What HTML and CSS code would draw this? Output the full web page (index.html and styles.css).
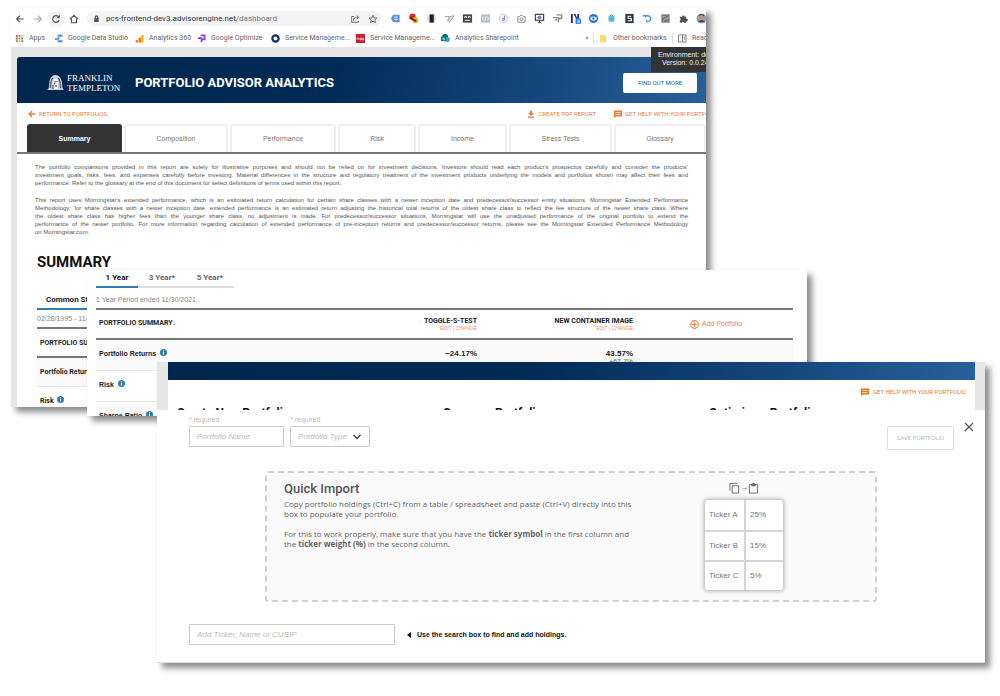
FILE: index.html
```html
<!DOCTYPE html>
<html lang="en">
<head>
<meta charset="utf-8">
<title>Portfolio Advisor Analytics</title>
<link rel="stylesheet" href="styles.css">
</head>
<body>
<main class="stage">

<section class="window window-report">
  <div class="toolbar">
    <div class="nav">
      <button aria-label="Back"><svg viewBox="0 0 12 12"><path d="M10.500 6H2M6 2 2 6l4 4" class="ln"/></svg></button>
      <button aria-label="Forward" class="dim"><svg viewBox="0 0 12 12"><path d="M1.500 6H10M6 2l4 4-4 4" class="ln"/></svg></button>
      <button aria-label="Reload" class="halo"><svg viewBox="0 0 12 12"><path d="M9.700 7.500A4 4 0 1 1 9 3.300" class="ln"/><path d="M10.500 1v4h-4z"/></svg></button>
      <button aria-label="Home"><svg viewBox="0 0 12 12"><path d="M1 6.500 6 1.500l5 5M3 5.500V10.500h6v-5" class="ln"/></svg></button>
    </div>
    <div class="address">
      <svg viewBox="0 0 8 8" class="lock"><path d="M1.500 3.500h5V8h-5z"/><path d="M2.700 4V2.200a1.300 1.300 0 0 1 2.600 0V4" class="ln"/></svg>
      <span class="url">pcs-frontend-dev3.advisorengine.net<span class="path">/dashboard</span></span>
      <button aria-label="Share"><svg viewBox="0 0 12 12"><path d="M5 3H2v7h8V8M4 8c0-3 2-4 4-4h2M8 2l2.500 2L8 6" class="ln thin"/></svg></button>
      <button aria-label="Bookmark"><svg viewBox="0 0 12 12"><path d="M6 1.500 7.300 4.700l3.400.2-2.600 2.200.8 3.400L6 8.600l-2.900 1.900.8-3.400L1.300 4.900l3.400-.2z" class="ln thin"/></svg></button>
    </div>
    <div class="extensions">
      <svg viewBox="0 0 12 12"><path d="M3.500 2h7v8h-7L1 6z" fill="#5b8ff0"/><path d="M4.500 4.500h4M4.500 7h4" stroke="#fff"/></svg>
      <svg viewBox="0 0 12 12"><circle cx="5" cy="4" r="3.500" fill="#d93025"/><circle cx="8" cy="8" r="3.300" fill="#edb52a"/><path d="M2 5 9 9" stroke="#702018" stroke-width="2"/></svg>
      <svg viewBox="0 0 12 12"><circle cx="6" cy="6" r="5" fill="#ddd"/><rect x="4" y="1.500" width="4.500" height="9" fill="#222"/></svg>
      <svg viewBox="0 0 12 12"><path d="M1 4h5L4 8M6 4l5-1-5 7-2-2 4-3" fill="none" stroke="#999"/></svg>
      <svg viewBox="0 0 12 12"><rect x="1" y="1.500" width="10" height="9" fill="#444"/><path d="M3 5.500V4h2v1.500M7 5.500V4h2v1.500M3 8h6" fill="none" stroke="#fff"/></svg>
      <svg viewBox="0 0 12 12"><rect x="1" y="1.500" width="10" height="9" fill="#b9bfc6"/><path d="M4 4 2.500 6 4 8M8 4l1.500 2L8 8M6.500 4l-1 4" fill="none" stroke="#fff"/></svg>
      <svg viewBox="0 0 12 12"><circle cx="6" cy="6" r="4.500" fill="#f8f8fc" stroke="#c4c4d6"/><path d="M7 3v5H5V6h2" fill="none" stroke="#7a7ac0"/></svg>
      <svg viewBox="0 0 12 12"><path d="M2 4h2l1-1.500h2L8 4h2v6H2z" fill="none" stroke="#888"/><circle cx="6" cy="6.800" r="1.600" fill="none" stroke="#888"/></svg>
      <svg viewBox="0 0 12 12"><rect x="1.500" y="1.500" width="9" height="6.500" fill="none" stroke="#444" stroke-width="1.300"/><path d="M4 10.500h4M6 8v2" stroke="#444"/><circle cx="6" cy="4.700" r="2" fill="#8573d8"/></svg>
      <svg viewBox="0 0 12 12"><path d="M5 2h5.500v4H7M1 5h6v5M3 7.500h3" fill="none" stroke="#888" stroke-width="1.400"/></svg>
      <svg viewBox="0 0 12 12"><path d="M1 1h2v10H1zM4 1h2l2 5V1h2v6H7z" fill="#1b2a5c"/><rect x="6" y="6" width="6" height="6" rx="1" fill="#2f7df6"/><path d="M8 7.500h2v3H8M8 9h2" fill="none" stroke="#fff" stroke-width=".7"/></svg>
      <svg viewBox="0 0 12 12"><circle cx="6" cy="6" r="5" fill="#1a73e8"/><ellipse cx="6" cy="6" rx="3.500" ry="2.300" fill="#fff"/><circle cx="6" cy="6" r="1.300" fill="#1a73e8"/></svg>
      <svg viewBox="0 0 12 12"><circle cx="6" cy="6.500" r="3.500" fill="#62c5dc"/><path d="M3 4 6 2l3 2M4 6.500h4" fill="none" stroke="#2e93b0"/></svg>
      <svg viewBox="0 0 12 12"><rect x="1.500" y="1" width="9" height="10" fill="#2c3440"/><path d="M8 3.500H4.500V6H8v2.500H4" fill="none" stroke="#fff" stroke-width="1.200"/></svg>
      <svg viewBox="0 0 12 12"><path d="M1 3h5a3 3 0 0 1 0 6.500H5V7M4 3v2" fill="none" stroke="#4b93ef" stroke-width="1.400"/></svg>
      <svg viewBox="0 0 12 12"><rect x="1.500" y="1.500" width="9" height="9" fill="#777"/><path d="M3 9 6 6l2 1 2-3M2 4h4" fill="none" stroke="#ccc" stroke-width=".8"/></svg>
      <svg viewBox="0 0 12 12"><path d="M2 4h2.500a1.400 1.400 0 1 1 2.800 0H9v2.300a1.400 1.400 0 1 1 0 2.700v1.500H6.500a1.300 1.300 0 0 0-2.500 0H2V8a1.300 1.300 0 0 0 0-2.500z" fill="#4d5156"/></svg>
      <svg viewBox="0 0 12 12"><circle cx="6" cy="6" r="5.500" fill="#9aa4b5"/><circle cx="6" cy="4.500" r="2.300" fill="#c98f75"/><path d="M2 10c1-3 7-3 8 0z" fill="#3b4a66"/><path d="M3.500 3.500C4 1 8 1 8.500 3.500" fill="none" stroke="#444" stroke-width="1.300"/></svg>
    </div>
  </div>

  <nav class="bookmarks" aria-label="Bookmarks">
    <a href="#"><svg viewBox="0 0 10 10"><path d="M1 1h2v2H1zM1 4h2v2H1z" fill="#ea4335"/><path d="M4 1h2v2H4zM7 7h2v2H7z" fill="#ea6035"/><path d="M7 1h2v2H7zM4 7h2v2H4z" fill="#fbbc05"/><path d="M4 4h2v2H4z" fill="#4285f4"/><path d="M7 4h2v2H7zM1 7h2v2H1z" fill="#34a853"/></svg>Apps</a>
    <a href="#"><svg viewBox="0 0 10 10"><path d="M2 5.500h3M5 2h3.500M5 8h3.500" stroke="#4285f4" stroke-width="2.200" stroke-linecap="round"/><path d="M3 5.500 5.500 2.500M3 5.500l3 2.500" stroke="#7fb0fb" stroke-width="1.500"/></svg>Google Data Studio</a>
    <a href="#"><svg viewBox="0 0 10 10"><circle cx="2" cy="8" r="1.400" fill="#e37400"/><rect x="4" y="4" width="2.500" height="5.500" rx="1" fill="#e37400"/><rect x="7" y="1" width="2.500" height="8.500" rx="1" fill="#f9ab00"/></svg>Analytics 360</a>
    <a href="#"><svg viewBox="0 0 10 10"><path d="M1 4.500h4V9M4 1.500h4.500V6H6" fill="none" stroke="#8a3ff0" stroke-width="2"/></svg>Google Optimize</a>
    <a href="#"><svg viewBox="0 0 10 10"><circle cx="5" cy="5" r="3.500" fill="none" stroke="#0b2a7a" stroke-width="2.400"/></svg>Service Manageme...</a>
    <a href="#"><svg viewBox="0 0 10 10"><path d="M0 0h10v10H0z" fill="#c8202c"/><path d="M1.500 6.500V4.500h1.500v2M4.500 4.500H6v2H4.500zM7 4.500v2h1.500v-2" fill="none" stroke="#fff" stroke-width=".7"/></svg>Service Manageme...</a>
    <a href="#"><svg viewBox="0 0 10 10"><circle cx="4.500" cy="3.500" r="3.400" fill="#036c70"/><circle cx="7" cy="6" r="2.800" fill="#37a6a8"/><rect x="0" y="3" width="5.500" height="5" fill="#03787c"/><path d="M4 4.500H2v1h2v1H1.800" fill="none" stroke="#fff" stroke-width=".6"/></svg>Analytics Sharepoint</a>
    <button aria-label="More bookmarks">»</button>
    <a href="#" class="ruled"><svg viewBox="0 0 10 10"><path d="M1 1h5l2 1.500V9.500H1z" fill="#fbdc74"/></svg>Other bookmarks</a>
    <a href="#" class="ruled"><svg viewBox="0 0 10 10"><path d="M.5 1h8.500v8H.5zM5 1v8M6 3.500h2M6 5.500h2" fill="none" stroke="#777"/></svg>Read</a>
  </nav>

  <div class="viewport">
    <div class="env"><p>Environment: dev<br>Version: 0.0.24</p></div>
    <div class="site">
      <header class="banner">
        <div class="logo">
          <svg viewBox="0 0 17 16"><path d="M0 15C2 14 2 12 2.300 8 2.700 3 5 0 8.500 0S14.500 3 15 8c.3 4 .3 6 2 7z" fill="#cfd3d8"/><path d="M3.500 13C4 10 3 5 6 3M13.500 13c-.5-3 .3-8-2.500-10" fill="none" stroke="#4a5560" stroke-width="1.200"/><path d="M6.500 14V5.500C7 3.500 10 3.500 10.500 5.500V14z" fill="#fff"/><path d="M8 6v2l-1 1.500M9.500 6.500h1M8 11h2M6 14v-4" fill="none" stroke="#3a4550"/></svg>
          <span>FRANKLIN<br>TEMPLETON</span>
        </div>
        <h1>PORTFOLIO ADVISOR ANALYTICS</h1>
        <a href="#" class="more">FIND OUT MORE</a>
      </header>
      <div class="actions">
        <a href="#" class="back"><svg viewBox="0 0 8 8"><path d="M7 4H1.500M4 1 1.200 4 4 7" fill="none" stroke="currentColor" stroke-width="1.300"/></svg>RETURN TO PORTFOLIOS</a>
        <a href="#"><svg viewBox="0 0 8 8"><path d="M3 .5h2v2.500h2L4 6 1 3h2zM1 6.500h6v1.300H1z" fill="currentColor"/></svg>CREATE PDF REPORT</a>
        <a href="#"><svg viewBox="0 0 8 8"><path d="M0 .5h8v6H2L0 8z" fill="currentColor"/><path d="M1.500 2.500h5M1.500 4.500h5" stroke="#fff" stroke-width=".8"/></svg>GET HELP WITH YOUR PORTFOLIO</a>
      </div>
      <nav class="tabs" aria-label="Report">
        <a href="#" class="on">Summary</a><a href="#">Composition</a><a href="#">Performance</a><a href="#">Risk</a><a href="#">Income</a><a href="#">Stress Tests</a><a href="#">Glossary</a>
      </nav>
      <div class="notes">
        <p>The portfolio comparisons provided in this report are solely for illustrative purposes and should not be relied on for investment decisions. Investors should read each product's prospectus carefully and consider the products'<br>investment goals, risks, fees, and expenses carefully before investing. Material differences in the structure and regulatory treatment of the investment products underlying the models and portfolios shown may affect their fees and<br><span class="end">performance. Refer to the glossary at the end of this document for select definitions of terms used within this report.</span></p>
        <p>This report uses Morningstar's extended performance, which is an estimated return calculation for certain share classes with a newer inception date and predecessor/successor entity situations. Morningstar Extended Performance<br>Methodology: for share classes with a newer inception date, extended performance is an estimated return adjusting the historical total returns of the oldest share class to reflect the fee structure of the newer share class. Where<br>the oldest share class has higher fees than the younger share class, no adjustment is made. For predecessor/successor situations, Morningstar will use the unadjusted performance of the original portfolio to extend the<br>performance of the newer portfolio. For more information regarding calculation of extended performance of pre-inception returns and predecessor/successor returns, please see the Morningstar Extended Performance Methodology<br><span class="end">on Morningstar.com.</span></p>
      </div>
      <div class="summary">
        <h2>SUMMARY</h2>
        <a href="#" class="period">Common Start</a>
        <p class="range">02/28/1995 - 11/30/2021</p>
        <table>
          <thead><tr><th>PORTFOLIO SUMMARY</th></tr></thead>
          <tbody>
            <tr><th>Portfolio Returns</th></tr>
            <tr><th>Risk <svg class="info" viewBox="0 0 8 8"><circle cx="4" cy="4" r="4" fill="#2f7db5"/><path d="M4 1.500v1M4 3.300v3" stroke="#fff" stroke-width="1.200"/></svg></th></tr>
          </tbody>
        </table>
      </div>
    </div>
  </div>
</section>

<section class="window window-returns">
  <nav class="years" aria-label="Period">
    <a href="#" class="on">1 Year</a><a href="#">3 Year*</a><a href="#">5 Year*</a>
  </nav>
  <p class="range">1 Year Period ended 11/30/2021</p>
  <table>
    <colgroup><col class="c-name"><col class="c-fund"><col class="c-fund"><col></colgroup>
    <thead>
      <tr>
        <th class="name">PORTFOLIO SUMMARY↓</th>
        <th>TOGGLE-S-TEST<small><a href="#">EDIT</a> | <a href="#">CHANGE</a></small></th>
        <th>NEW CONTAINER IMAGE<small><a href="#">EDIT</a> | <a href="#">CHANGE</a></small></th>
        <th class="add"><a href="#"><svg viewBox="0 0 8 8"><circle cx="4" cy="4" r="3.400" fill="none" stroke="currentColor"/><path d="M4 2v4M2 4h4" stroke="currentColor"/></svg>Add Portfolio</a></th>
      </tr>
    </thead>
    <tbody>
      <tr><th class="name">Portfolio Returns <svg class="info" viewBox="0 0 8 8"><circle cx="4" cy="4" r="4" fill="#2f7db5"/><path d="M4 1.500v1M4 3.300v3" stroke="#fff" stroke-width="1.200"/></svg></th><td>−24.17%</td><td>43.57%<span class="gain">+67.7%</span></td><td></td></tr>
      <tr><th class="name">Risk <svg class="info" viewBox="0 0 8 8"><circle cx="4" cy="4" r="4" fill="#2f7db5"/><path d="M4 1.500v1M4 3.300v3" stroke="#fff" stroke-width="1.200"/></svg></th><td></td><td></td><td></td></tr>
      <tr><th class="name">Sharpe Ratio <svg class="info" viewBox="0 0 8 8"><circle cx="4" cy="4" r="4" fill="#2f7db5"/><path d="M4 1.500v1M4 3.300v3" stroke="#fff" stroke-width="1.200"/></svg></th><td></td><td></td><td></td></tr>
    </tbody>
  </table>
</section>

<section class="window window-import">
  <div class="behind">
    <div class="bar"></div>
    <div class="sheet">
      <a href="#" class="help"><svg viewBox="0 0 8 8"><path d="M0 .5h8v6H2L0 8z" fill="currentColor"/><path d="M1.500 2.500h5M1.500 4.500h5" stroke="#fff" stroke-width=".8"/></svg>GET HELP WITH YOUR PORTFOLIO</a>
      <div class="heads"><h2>Create New Portfolio</h2><h2>Compare Portfolio</h2><h2>Optimize a Portfolio</h2></div>
    </div>
  </div>
  <form class="panel">
    <div class="fields">
      <div class="field name-field"><label for="pname">* required</label><input id="pname" type="text" placeholder="Portfolio Name"></div>
      <div class="field type-field"><label for="ptype">* required</label>
        <div class="pick"><select id="ptype"><option>Portfolio Type</option></select><svg viewBox="0 0 10 10"><path d="M1.500 3 5 6.500 8.500 3" fill="none" stroke="#444" stroke-width="1.500"/></svg></div>
      </div>
      <button type="button" class="save">SAVE PORTFOLIO</button>
      <button type="button" class="close" aria-label="Close"><svg viewBox="0 0 10 10"><path d="M1 1l8 8M9 1 1 9" stroke="#555" stroke-width="1.200"/></svg></button>
    </div>
    <div class="drop">
      <div class="copy">
        <h3>Quick Import</h3>
        <p>Copy portfolio holdings (Ctrl+C) from a table / spreadsheet and paste (Ctrl+V) directly into this<br>box to populate your portfolio.</p>
        <p>For this to work properly, make sure that you have the <b>ticker symbol</b> in the first column and<br>the <b>ticker weight (%)</b> in the second column.</p>
      </div>
      <div class="sample">
        <div class="hint-icons">
          <svg viewBox="0 0 12 12"><path d="M1 9V1h8M3.500 3.500h7v8h-7z" fill="none" stroke="#666"/></svg><span>→</span><svg viewBox="0 0 12 12"><path d="M1.500 2h9v9.500h-9z" fill="none" stroke="#666"/><path d="M3.500 1.500h1.300a1.200 1.200 0 0 1 2.400 0h1.300V4h-5z" fill="#666"/></svg>
        </div>
        <table>
          <tr><td>Ticker A</td><td>25%</td></tr>
          <tr><td>Ticker B</td><td>15%</td></tr>
          <tr><td>Ticker C</td><td>5%</td></tr>
        </table>
      </div>
    </div>
    <div class="search">
      <input id="find" type="text" placeholder="Add Ticker, Name or CUSIP">
      <label for="find"><svg viewBox="0 0 4 6"><path d="M4 0v6L0 3z"/></svg>Use the search box to find and add holdings.</label>
    </div>
  </form>
</section>

</main>
</body>
</html>
```
FILE: styles.css
```css
* { box-sizing: border-box; }
:root { --narrow: Roboto, "Liberation Sans", Arial, sans-serif; }
body { margin: 0; background: #fff; color: #555; font: 8px/10px "Liberation Sans", Arial, sans-serif; }
h1, h2, h3, p { margin: 0; }
a { color: inherit; text-decoration: none; }
button { padding: 0; border: 0; background: none; font: inherit; color: inherit; }
svg { display: block; flex: none; }
table { border-collapse: collapse; }
th, td { padding: 0; text-align: left; }

.stage { position: relative; min-height: 696px; overflow: hidden; }
.window { position: absolute; overflow: hidden; background: #fff; box-shadow: 5px 5px 6px rgba(0, 0, 0, .45); }
.window-report { left: 1.1%; top: 8px; width: 69.5%; height: 399px; }
.window-returns { left: 8.7%; top: 270px; width: 72%; height: 146px; padding: 0 14px 0 9px; }
.window-import { left: 15.7%; top: 362px; width: 82.8%; }

/* Browser chrome */
.toolbar { display: flex; align-items: center; height: 21px; overflow: hidden; }
.toolbar button { display: grid; place-items: center; width: 18px; height: 16px; flex: none; }
.toolbar svg { width: 10px; height: 10px; fill: #555; }
.ln { fill: none; stroke: #555; stroke-width: 1.400; }
.thin { stroke-width: 1; }
.nav { display: flex; width: 76px; flex: none; }
.dim { opacity: .5; }
.toolbar .halo { border-radius: 8px; background: #f1f3f4; }
.address { display: flex; align-items: center; flex: 1; height: 15px; padding-left: 6px; border-radius: 8px; background: #f1f3f4; }
.toolbar .lock { width: 7px; height: 7px; margin-right: 6px; }
.url { flex: 1; color: #333; font: 8px/12px Roboto, sans-serif; white-space: nowrap; }
.path { color: #777; }
.extensions { display: grid; grid-template-columns: repeat(18, 18px); place-items: center; width: 320px; margin-left: 4px; }
.toolbar .extensions svg { width: 11px; height: 11px; }

.bookmarks { display: grid; grid-template-columns: 39px 81px 62px 74px 85px 85px 1fr 12px 79px 34px; align-items: center; height: 18px; padding-left: 4px; font: 7px/10px Roboto, sans-serif; color: #666; white-space: nowrap; }
.bookmarks a { display: flex; align-items: center; gap: 5px; }
.bookmarks svg { width: 9px; height: 9px; }
.bookmarks .ruled { border-left: 1px solid #ddd; padding-left: 5px; }

.viewport { position: relative; height: 360px; padding: 10px 0 0 6px; background: #e6e6e6; }
.env { position: absolute; right: 0; top: 0; z-index: 1; width: 55px; height: 25px; padding: 4px 0 0 7px; overflow: hidden; background: #333; color: #eee; font-size: 7px; line-height: 8px; white-space: nowrap; }
.env p { width: max-content; text-align: center; }
.site { height: 350px; border-radius: 3px 0 0 0; background: #fff; overflow: hidden; }
.banner { display: flex; align-items: center; height: 46px; padding: 6px 9px 0 30px; background: linear-gradient(100deg, #00264d 0%, #002b57 45%, #15467c 75%, #28609b 100%); color: #fff; }
.logo { display: flex; align-items: center; gap: 3px; width: 88px; font: 9px/10px "Liberation Serif", serif; white-space: nowrap; }
.logo svg { width: 17px; height: 16px; }
.banner h1 { flex: 1; font: bold 13px/18px var(--narrow); white-space: nowrap; }
.more { width: 74px; border-radius: 2px; background: #fff; color: #17638f; font: 6px/20px var(--narrow); text-align: center; }
.actions { display: flex; align-items: center; gap: 18px; height: 21px; padding-left: 11px; color: #ea7a35; font: 6px/10px var(--narrow); white-space: nowrap; }
.actions a { display: flex; align-items: center; gap: 3px; flex: none; }
.actions .back { flex: 1; }
.actions a:last-child { width: 92px; }
.actions svg, .help svg { width: 8px; height: 8px; }
.tabs { display: grid; grid-template-columns: 95fr 104fr 106fr 78fr 89fr 103fr 92fr; gap: 2px; padding-left: 10px; border-bottom: 2px solid #777; }
.tabs a { border: 2px solid #eee; border-bottom: 0; border-radius: 3px 3px 0 0; color: #777; font-size: 7px; line-height: 26px; text-align: center; }
.tabs .on { border-color: #333; background: #333; color: #fff; font-weight: bold; }
.notes { display: grid; gap: 9px; padding: 9px 18px 0; color: #555; font: 6px/8px "Liberation Sans", Arial, sans-serif; text-align: justify; text-align-last: justify; }
.end { display: block; text-align-last: left; }
.summary { padding: 17px 20px 0; color: #222; }
.summary h2 { font: bold 15px/18px var(--narrow); color: #111; }
.period { display: block; margin-top: 20px; padding-left: 9px; border-bottom: 2px solid #2f7db5; font: bold 8px/17px var(--narrow); }
.range { color: #888; font-size: 7px; line-height: 17px; }
.summary table { width: 100%; }
.summary th { height: 29px; padding-left: 3px; border-bottom: 1px solid #e8e8e8; font: bold 7px/10px var(--narrow); }
.summary thead th { border-top: 2px solid #777; border-bottom: 2px solid #777; }
.window-report tbody tr:nth-child(odd), .window-returns tbody tr:nth-child(odd) { background: #fafafa; }
.info { display: inline-block; width: 7px; height: 7px; margin-left: 2px; }

/* Returns table */
.years { display: flex; }
.years a { flex: none; width: 48px; border-bottom: 2px solid #ddd; color: #666; font: bold 8px/16px var(--narrow); text-align: center; }
.years .on { width: 42px; border-color: #2f7db5; color: #111; }
.window-returns .range { padding-top: 3px; }
.window-returns table { width: 100%; table-layout: fixed; color: #222; font-size: 8px; }
.c-name { width: 225px; }
.c-fund { width: 156px; }
.window-returns th, .window-returns td { height: 31px; text-align: right; font-weight: bold; }
.window-returns thead th { height: 30px; border-top: 2px solid #777; border-bottom: 2px solid #777; font: bold 7px/8px var(--narrow); }
.window-returns tbody tr { border-bottom: 1px solid #e8e8e8; }
.window-returns .name { padding: 0 0 2px 3px; text-align: left; font-size: 7px; }
.window-returns td { padding-top: 9px; vertical-align: top; line-height: 9px; }
small { display: block; color: #f0905a; font: 5px/6px "Liberation Sans", Arial, sans-serif; }
.window-returns thead .add { padding-left: 57px; color: #f07f45; font: 7px/10px "Liberation Sans", Arial, sans-serif; }
.add a { display: flex; align-items: center; gap: 3px; }
.add svg { width: 9px; height: 9px; }
.gain { display: block; color: #3d7a3d; font-size: 7px; font-weight: normal; line-height: 7px; }

/* Import dialog */
.behind { padding: 0 10px 0 11px; background: #e6e6e6; }
.bar { height: 18px; background: linear-gradient(100deg, #00264d 0%, #002b57 45%, #15467c 75%, #28609b 100%); }
.sheet { height: 30px; padding: 0 9px; overflow: hidden; background: #fff; }
.help { display: flex; align-items: center; justify-content: flex-end; gap: 4px; color: #ea7717; font: 6px/24px var(--narrow); }
.heads { display: grid; grid-template-columns: repeat(3, 266px); }
.heads h2 { font: bold 12px/18px var(--narrow); color: #111; }
.panel { padding: 4px 11px 17px 32px; border-bottom: 1px solid #ddd; background: #fff; }
.fields { display: flex; align-items: flex-start; gap: 6px; }
.field label { display: block; color: #bbb; font-size: 7px; line-height: 12px; }
.name-field { width: 95px; }
.type-field { width: 80px; }
input, select { display: block; width: 100%; height: 21px; padding: 0 7px; border: 1px solid #ccc; border-radius: 1px; background: #fff; color: #bbb; font: italic 8px/12px "Liberation Sans", Arial, sans-serif; appearance: none; }
input::placeholder { color: #bbb; opacity: 1; }
.pick { display: grid; align-items: center; }
.pick select, .pick svg { grid-area: 1 / 1; }
.pick svg { justify-self: end; width: 10px; height: 10px; margin-right: 8px; pointer-events: none; }
.save { width: 67px; height: 24px; margin: 12px 4px 0 auto; border: 1px solid #ddd; border-radius: 2px; color: #bbb; font: 6px/12px var(--narrow); white-space: nowrap; }
.close { margin-top: 8px; }
.close svg { width: 10px; height: 10px; }
.drop { display: flex; justify-content: space-between; margin: 21px 97px 22px 76px; padding: 8px 91px 9px 17px; border: 2px dashed #d0d0d0; border-radius: 3px; background: #fafafa; }
.copy p { margin-bottom: 10px; color: #666; font-family: "Open Sans", sans-serif; white-space: nowrap; }
.copy h3 { margin-bottom: 2px; color: #555; font: 500 13px/16px var(--narrow); }
.sample { width: 80px; }
.hint-icons { display: flex; align-items: center; justify-content: center; height: 14px; margin-bottom: 4px; }
.hint-icons svg { width: 11px; height: 12px; }
.sample table { width: 80px; table-layout: fixed; border-collapse: separate; border-spacing: 0; border: 1px solid #ccc; border-radius: 4px; background: #fff; box-shadow: 0 0 4px rgba(0, 0, 0, .3); }
.sample td { height: 30px; padding-left: 4px; color: #777; }
.sample td + td { border-left: 2px solid #d5d5d5; }
.sample tr + tr td { border-top: 2px solid #d5d5d5; }
.search { display: flex; align-items: center; gap: 12px; }
.search input { width: 206px; }
.search label { display: flex; align-items: center; gap: 6px; color: #111; font-size: 7px; font-weight: bold; }
.search label svg { width: 4px; height: 6px; }
```
